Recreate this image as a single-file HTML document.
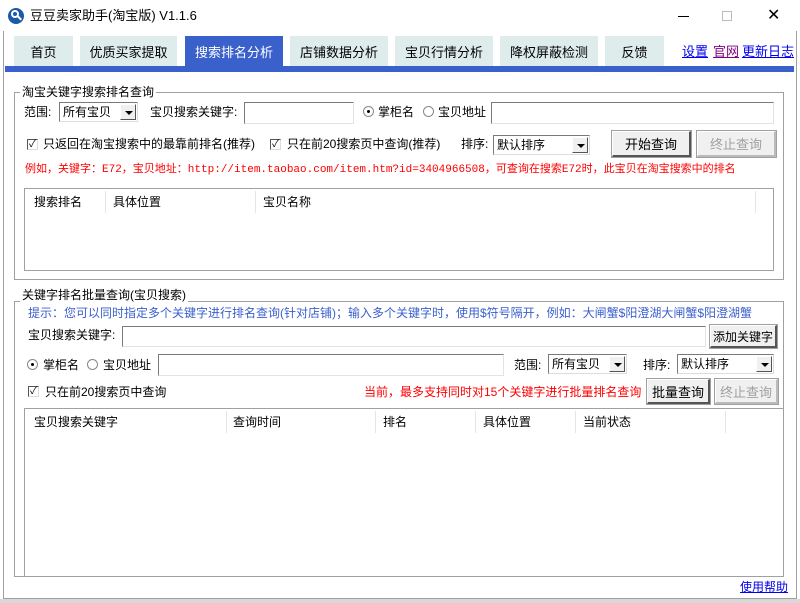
<!DOCTYPE html>
<html><head><meta charset="utf-8"><style>
*{box-sizing:border-box;margin:0;padding:0}
body{width:800px;height:603px;background:#fff;font-family:"Liberation Sans","Noto Sans CJK SC","WenQuanYi Zen Hei",sans-serif;font-size:12px;color:#000;position:relative;overflow:hidden}
.a{position:absolute;white-space:nowrap;line-height:14px}
.tab{position:absolute;top:36px;height:30px;background:#deecec;font-size:13px;display:flex;align-items:center;justify-content:center}
.grp{position:absolute;border:1px solid #a0a0a0}
.gt{position:absolute;background:#fff;padding:0 2px;line-height:14px;font-size:12px}
.in{position:absolute;border:1px solid #7a7a7a;border-right-color:#e3e3e3;border-bottom-color:#e3e3e3;background:#fff}
.sel{position:absolute;border:1px solid #7a7a7a;border-right-color:#dcdcdc;border-bottom-color:#dcdcdc;background:#fff;padding-left:3px;line-height:18px;font-size:12px}
.sel b{position:absolute;right:1px;top:1px;width:16px;bottom:1px;background:#f0f0f0;border:1px solid #fff;border-right-color:#555;border-bottom-color:#555}
.sel b:after{content:"";position:absolute;left:4px;top:6px;border:4px solid transparent;border-top:4px solid #000;border-bottom:0}
.btn{position:absolute;background:#f0f0f0;border:1px solid #fff;border-right:2px solid #555;border-bottom:2px solid #555;outline:1px solid #a0a0a0;display:flex;align-items:center;justify-content:center;font-size:13px;white-space:nowrap}
.dis{color:#a0a0a0}
.cb{position:absolute;width:11px;height:11px;border:1px solid #555;border-right-color:#ddd;border-bottom-color:#ddd;background:#fff;font-size:10px;line-height:9px;text-align:center}
.rd{position:absolute;width:11px;height:11px;border-radius:50%;border:1px solid #888;background:#fff}
.rd.on:after{content:"";position:absolute;left:3px;top:3px;width:3px;height:3px;background:#000;border-radius:50%}
.lv{position:absolute;border:1px solid #a0a0a0;background:#fff}
.sep{position:absolute;top:2px;height:22px;width:1px;background:#e5e5e5}
.lnk{color:#0000ee;text-decoration:underline}
</style></head><body>
<div style="position:absolute;left:0;top:0;width:800px;height:31px;background:#fff"></div>
<div style="position:absolute;left:3px;top:31px;width:1px;height:568px;background:#a0a0a0"></div>
<div style="position:absolute;left:796px;top:31px;width:1px;height:568px;background:#a0a0a0"></div>
<div style="position:absolute;left:3px;top:598px;width:794px;height:1px;background:#a0a0a0"></div>
<div style="position:absolute;left:0;top:599px;width:800px;height:4px;background:#d8d8d8"></div>
<div style="position:absolute;left:8px;top:8px;width:16px;height:16px;border-radius:50%;background:#1b5aa8"></div>
<div style="position:absolute;left:11px;top:10px;width:8px;height:8px;border-radius:50%;border:2px solid #fff"></div>
<div style="position:absolute;left:17px;top:17px;width:5px;height:2px;background:#fff;transform:rotate(45deg)"></div>
<div class="a" style="left:30px;top:9px;font-size:13px">豆豆卖家助手(淘宝版) V1.1.6</div>
<div style="position:absolute;left:678px;top:16px;width:11px;height:1px;background:#000"></div>
<div style="position:absolute;left:722px;top:11px;width:10px;height:10px;border:1px solid #bbb"></div>
<div class="a" style="left:767px;top:7px;font-size:16px;line-height:18px">✕</div>
<div class="tab" style="left:14px;width:59px">首页</div>
<div class="tab" style="left:80px;width:97px">优质买家提取</div>
<div class="tab" style="left:185px;width:98px;background:#3a60cb;color:#fff">搜索排名分析</div>
<div class="tab" style="left:290px;width:98px">店铺数据分析</div>
<div class="tab" style="left:395px;width:98px">宝贝行情分析</div>
<div class="tab" style="left:500px;width:98px">降权屏蔽检测</div>
<div class="tab" style="left:605px;width:59px">反馈</div>
<div class="a lnk" style="left:682px;top:45px;font-size:13px">设置</div>
<div class="a" style="left:713px;top:45px;font-size:13px;color:#800080;text-decoration:underline">官网</div>
<div class="a lnk" style="left:742px;top:45px;font-size:13px">更新日志</div>
<div style="position:absolute;left:5px;top:66px;width:789px;height:6px;background:#3a60cb"></div>
<div class="grp" style="left:14px;top:92px;width:770px;height:188px"></div>
<div class="gt" style="left:20px;top:85px">淘宝关键字搜索排名查询</div>
<div class="a" style="left:24px;top:105px">范围:</div>
<div class="sel" style="left:59px;top:102px;width:79px;height:20px">所有宝贝<b></b></div>
<div class="a" style="left:150px;top:105px">宝贝搜索关键字:</div>
<div class="in" style="left:244px;top:102px;width:110px;height:22px"></div>
<div class="rd on" style="left:363px;top:106px"></div>
<div class="a" style="left:378px;top:105px">掌柜名</div>
<div class="rd" style="left:423px;top:106px"></div>
<div class="a" style="left:438px;top:105px">宝贝地址</div>
<div class="in" style="left:491px;top:102px;width:283px;height:22px"></div>
<div class="cb" style="left:27px;top:139px">✓</div>
<div class="a" style="left:43px;top:137px">只返回在淘宝搜索中的最靠前排名(推荐)</div>
<div class="cb" style="left:270px;top:139px">✓</div>
<div class="a" style="left:287px;top:137px">只在前20搜索页中查询(推荐)</div>
<div class="a" style="left:461px;top:137px">排序:</div>
<div class="sel" style="left:493px;top:135px;width:97px;height:20px">默认排序<b></b></div>
<div class="btn" style="left:612px;top:131px;width:79px;height:26px">开始查询</div>
<div class="btn dis" style="left:697px;top:131px;width:79px;height:26px;border-color:#fff #bbb #bbb #fff">终止查询</div>
<div class="a" style="left:25px;top:163px;color:#f00;font-family:'Liberation Mono','Noto Sans CJK SC',monospace;font-size:11px">例如，关键字：E72，宝贝地址：http://item.taobao.com/item.htm?id=3404966508，可查询在搜索E72时，此宝贝在淘宝搜索中的排名</div>
<div class="lv" style="left:24px;top:188px;width:750px;height:83px">
 <div class="a" style="left:9px;top:6px">搜索排名</div>
 <div class="sep" style="left:80px"></div>
 <div class="a" style="left:88px;top:6px">具体位置</div>
 <div class="sep" style="left:230px"></div>
 <div class="a" style="left:238px;top:6px">宝贝名称</div>
 <div class="sep" style="left:730px"></div>
</div>
<div class="grp" style="left:14px;top:301px;width:770px;height:276px"></div>
<div class="gt" style="left:20px;top:288px">关键字排名批量查询(宝贝搜索)</div>
<div class="a" style="left:28px;top:306px;color:#3a5fcd">提示：您可以同时指定多个关键字进行排名查询(针对店铺)；输入多个关键字时，使用$符号隔开，例如：大闸蟹$阳澄湖大闸蟹$阳澄湖蟹</div>
<div class="a" style="left:28px;top:328px">宝贝搜索关键字:</div>
<div class="in" style="left:122px;top:326px;width:584px;height:21px"></div>
<div class="btn" style="left:710px;top:325px;width:67px;height:23px;font-size:12px">添加关键字</div>
<div class="rd on" style="left:27px;top:359px"></div>
<div class="a" style="left:43px;top:358px">掌柜名</div>
<div class="rd" style="left:87px;top:359px"></div>
<div class="a" style="left:103px;top:358px">宝贝地址</div>
<div class="in" style="left:158px;top:354px;width:346px;height:22px"></div>
<div class="a" style="left:514px;top:358px">范围:</div>
<div class="sel" style="left:548px;top:354px;width:79px;height:20px">所有宝贝<b></b></div>
<div class="a" style="left:643px;top:358px">排序:</div>
<div class="sel" style="left:677px;top:354px;width:97px;height:20px">默认排序<b></b></div>
<div class="cb" style="left:28px;top:386px">✓</div>
<div class="a" style="left:45px;top:385px">只在前20搜索页中查询</div>
<div class="a" style="left:364px;top:385px;color:#f00">当前，最多支持同时对15个关键字进行批量排名查询</div>
<div class="btn" style="left:647px;top:379px;width:63px;height:25px">批量查询</div>
<div class="btn dis" style="left:715px;top:379px;width:63px;height:25px;border-color:#fff #bbb #bbb #fff">终止查询</div>
<div class="lv" style="left:24px;top:408px;width:760px;height:169px">
 <div class="a" style="left:9px;top:6px">宝贝搜索关键字</div>
 <div class="sep" style="left:201px"></div>
 <div class="a" style="left:208px;top:6px">查询时间</div>
 <div class="sep" style="left:350px"></div>
 <div class="a" style="left:358px;top:6px">排名</div>
 <div class="sep" style="left:450px"></div>
 <div class="a" style="left:458px;top:6px">具体位置</div>
 <div class="sep" style="left:550px"></div>
 <div class="a" style="left:558px;top:6px">当前状态</div>
 <div class="sep" style="left:700px"></div>
</div>
<div class="a lnk" style="left:740px;top:580px">使用帮助</div>
</body></html>
